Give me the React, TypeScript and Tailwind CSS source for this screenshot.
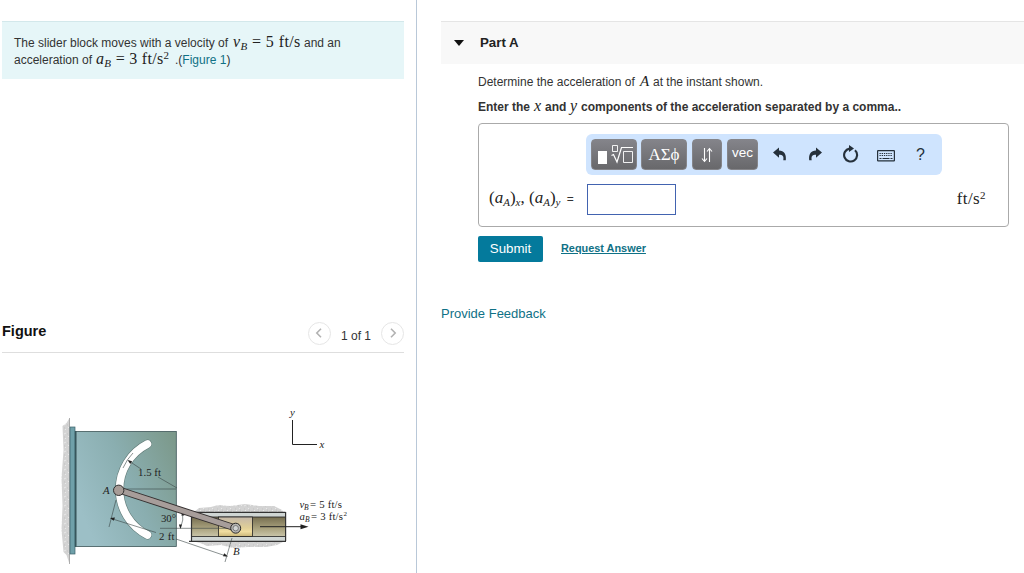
import type { ReactNode } from 'react';

function MathText({ className = 'text-[15px]', children }: { className?: string; children: ReactNode }) {
    return (
        <span className={`font-['Liberation_Serif',serif] font-normal whitespace-pre text-[#222] ${className}`}>
            {children}
        </span>
    );
}

function Sub({ children }: { children: ReactNode }) {
    return <span className="relative top-[3px] text-[11px] italic">{children}</span>;
}

function Sup({ children }: { children: ReactNode }) {
    return <span className="relative -top-[5px] text-[11px]">{children}</span>;
}

function PagerButton({ path }: { path: string }) {
    return (
        <button className="flex size-[23px] items-center justify-center rounded-full border border-[#e6e6e6] bg-white">
            <svg width="8" height="10" viewBox="0 0 8 10" fill="none" stroke="#b2b2b2" strokeWidth="1.6">
                <path d={path} />
            </svg>
        </button>
    );
}

function SliderFigure() {
    return (
        <svg width="404" height="173" viewBox="0 400 404 173" className="block">
            <defs>
                <linearGradient id="plate" x1="0" y1="0.6" x2="1" y2="0.1">
                    <stop offset="0" stopColor="#9cbfc6" />
                    <stop offset="0.5" stopColor="#8aaeb0" />
                    <stop offset="1" stopColor="#7c998b" />
                </linearGradient>
                <linearGradient id="channel" x1="0" y1="0" x2="0" y2="1">
                    <stop offset="0" stopColor="#766e50" />
                    <stop offset="0.6" stopColor="#aaa37f" />
                    <stop offset="1" stopColor="#cac5a9" />
                </linearGradient>
                <linearGradient id="block" x1="0" y1="0" x2="0" y2="1">
                    <stop offset="0" stopColor="#c5b8aa" />
                    <stop offset="0.55" stopColor="#e0cf97" />
                    <stop offset="0.75" stopColor="#f0dda0" />
                    <stop offset="1" stopColor="#c9b578" />
                </linearGradient>
                <pattern id="stone" width="9" height="9" patternUnits="userSpaceOnUse">
                    <rect width="9" height="9" fill="#d3d3d3" />
                    <path d="M1 2l2-1M5 4l1 1M2 7l1-1M7 8l1-1M7 1l1 1" stroke="#e9e9e9" />
                    <path d="M4 2l1 0M1 5l1 0M6 6l1 0" stroke="#bcbcbc" strokeWidth="0.7" />
                </pattern>
            </defs>

            {/* wall and plate */}
            <path d="M69.5 418l-3 5-4 3 1 24-2 28 1 28-1 24 2 22 3 3 3 9z" fill="url(#stone)" />
            <path d="M69.5 418v146" stroke="#909090" strokeWidth="0.7" />
            <rect x="70" y="427" width="5" height="127" fill="#6fa0a9" stroke="#3d626a" strokeWidth="0.7" />
            <rect x="76" y="431.5" width="100.3" height="115" fill="url(#plate)" stroke="#3d5558" strokeWidth="0.8" />
            <path d="M75.5 431v116" stroke="#37565c" strokeWidth="1.4" />
            <path d="M147.5 444A51 51 0 0 0 147.5 535" fill="none" stroke="#5f7976" strokeWidth="8.8" strokeLinecap="round" />
            <path d="M147.5 444A51 51 0 0 0 147.5 535" fill="none" stroke="#fff" strokeWidth="7.6" strokeLinecap="round" />

            {/* guide rail */}
            <path d="M194 512l5-4 12-1 7-2 12 1 15-2 14 2 15 0 8 4 1 2zM192 541l8 2 7 3 14-1 12 3 15-1 18 0 11-2 8-4z" fill="url(#stone)" />
            <rect x="191.5" y="512" width="94" height="29" fill="#d0d6d4" />
            <rect x="191.5" y="517" width="94" height="19.5" fill="url(#channel)" stroke="#222" strokeWidth="0.8" />
            <path d="M191.5 512.3h94M189 541.3h97M191.5 512v29M285.6 512v29" stroke="#333" strokeWidth="1.2" />
            <rect x="218.5" y="517" width="34" height="19.5" fill="url(#block)" stroke="#222" strokeWidth="0.8" />

            {/* dimension lines */}
            <g fill="none" stroke="#3b4747" strokeWidth="0.6">
                <path d="M124 489H176M160 528.3H235M116 500L109 527M232 538L225 562" />
                <path d="M111 518.5L156 532.5M176 539L226 556M129 461L141 469M158 477L177 488M123 468Q127 459 133 453" />
                <path d="M182.5 512Q184 520 180.5 528" />
            </g>
            <g fill="#222">
                <path d="M110 518l5-.4-1.3 3.2zM228 556.5l-5-.3 1.2-3zM127.5 460l4.6 1.2-1.8 2.7zM182.8 511l1.5 4.5h-3zM180.4 529l-1.5-4.5h3z" />
                <path d="M308.5 526.7l-8-2.5v5z" />
            </g>

            {/* connecting rod */}
            <path d="M119 490L235.5 528" stroke="#353030" strokeWidth="7" />
            <path d="M119 490L235.5 528" stroke="#a79d9a" strokeWidth="5" />
            <circle cx="118.7" cy="490.3" r="5.2" fill="#a79c97" stroke="#2f2f2f" />
            <circle cx="235.7" cy="528.2" r="5" fill="#b8b6b4" stroke="#292929" />
            <circle cx="235.7" cy="528.2" r="2.7" fill="#d2d4d4" stroke="#666" strokeWidth="0.8" />

            <path d="M260 526.7H302M292.5 420V444.5H317" fill="none" stroke="#222" strokeWidth="1" />
            <g fontFamily="'Liberation Serif', serif" fontSize="10.8" fill="#222">
                <text x="138" y="476" textLength="23">1.5 ft</text>
                <text x="161" y="522" textLength="15">30°</text>
                <text x="159" y="540" textLength="15.5">2 ft</text>
                <text x="103" y="493.5" fontStyle="italic">A</text>
                <text x="233" y="555" fontStyle="italic">B</text>
                <text x="290" y="416" fontStyle="italic">y</text>
                <text x="319.5" y="447.5" fontStyle="italic">x</text>
                <text x="299.5" y="508" fontStyle="italic">v</text>
                <text x="304" y="510" fontSize="7.5" fontStyle="italic">B</text>
                <text x="310" y="508" textLength="32">= 5 ft/s</text>
                <text x="299.5" y="520" fontStyle="italic">a</text>
                <text x="305" y="522" fontSize="7.5" fontStyle="italic">B</text>
                <text x="311" y="520" textLength="32">= 3 ft/s</text>
                <text x="343.5" y="515.5" fontSize="7">2</text>
            </g>
        </svg>
    );
}

function Toolbar() {
    const button = 'flex h-[31px] shrink-0 items-center justify-center rounded-[4px] border border-[#858589] bg-linear-to-b from-[#84848a] to-[#68686b] text-white';

    return (
        <div className="ml-[107px] flex h-[41px] w-[356px] items-center rounded-[6px] bg-[#cfe4fe] pl-[5px] text-[#25303b]">
            <button className={`${button} w-[46px]`}>
                <svg width="40" height="24" viewBox="0 0 40 24" fill="none" stroke="white" className="shrink-0">
                    <rect x="4" y="8" width="9" height="13" fill="white" stroke="none" />
                    <path d="M18.5 2.5h5v6h-5z" strokeWidth="0.9" />
                    <path d="M17.5 12.5l2-1 3.5 7.5L27.5 4.5H39" strokeWidth="1.2" />
                    <path d="M29.5 8.5h9v11h-9z" strokeWidth="0.9" />
                </svg>
            </button>
            <button className={`${button} ml-1 w-[46px] font-['Liberation_Serif',serif] text-[17px]`}>ΑΣϕ</button>
            <button className={`${button} ml-[5px] w-[30px]`}>
                <svg width="14" height="16" viewBox="0 0 14 16" fill="none" stroke="white" strokeWidth="1.1">
                    <path d="M4.5 1v13M2 11.5l2.5 3 2.5-3M9.5 15V2M7 4.5l2.5-3 2.5 3" />
                </svg>
            </button>
            <button className={`${button} ml-[5px] w-[31px] text-[13.5px]`}><span className="-mt-[2px]">vec</span></button>
            <svg className="-mt-[2px] ml-[15px]" width="14" height="14" viewBox="0 0 14 14" fill="currentColor">
                <path d="M0 5.5L6 .5v3c5 0 7.5 3.5 6.8 9.8h-2.5C11 9 9.5 7.8 6 7.8v3z" />
            </svg>
            <svg className="-mt-[2px] ml-[21px]" width="14" height="14" viewBox="0 0 14 14" fill="currentColor">
                <path d="M14 5.5L8 .5v3C3 3.5.5 7 1.2 13.3h2.5C3 9 4.5 7.8 8 7.8v3z" />
            </svg>
            <svg className="-mt-px ml-[20px]" width="17" height="18" viewBox="0 0 17 18">
                <path d="M13 5.2A6.5 6.5 0 1 1 7.5 3.6" fill="none" stroke="currentColor" strokeWidth="2.1" />
                <path d="M7 0l5 3.5-5 3.5z" fill="currentColor" />
            </svg>
            <svg className="mt-[3px] ml-[18px]" width="18" height="12" viewBox="0 0 18 12" fill="none" stroke="currentColor">
                <rect x="0.6" y="0.6" width="16.8" height="10.3" rx="0.5" strokeWidth="1.2" />
                <path d="M2.5 3.5h13M2.5 5.5h13" strokeDasharray="1.3 0.9" strokeWidth="1.2" />
                <path d="M2.5 8.5h2M5.5 8.5h7M13.5 8.5h2" strokeWidth="1.2" />
            </svg>
            <span className="ml-[21px] text-[16px]">?</span>
        </div>
    );
}

export default function App() {
    return (
        <div className="flex h-[573px] w-[1024px] overflow-hidden bg-white font-['Liberation_Sans',Arial,sans-serif] text-[12px] text-[#333]">
            <div className="flex w-[417px] flex-col border-r border-[#b9c8d8]">
                <div className="mt-[21px] ml-[2px] h-[59px] w-[402px] border-t border-[#d3e8eb] bg-[#e6f6f8] pt-[11px] pl-3 leading-[17px]">
                    <div className="flex h-[17px] items-baseline whitespace-pre">
                        <span className="w-[219px]">The slider block moves with a velocity of</span>
                        <MathText className="w-[71px] text-[16px] tracking-[0.4px]"><i>v</i><Sub>B</Sub> = 5 ft/s</MathText>
                        <span>and an</span>
                    </div>
                    <div className="flex h-[17px] items-baseline whitespace-pre">
                        <span className="w-[82px]">acceleration of</span>
                        <MathText className="w-[79px] text-[16px] tracking-[0.3px]"><i>a</i><Sub>B</Sub> = 3 ft/s<Sup>2</Sup></MathText>
                        <span>.(<a className="text-[#0f7186]">Figure 1</a>)</span>
                    </div>
                </div>
                <div className="mt-[241px] ml-[2px] flex h-[33px] w-[402px] border-b border-[#dedede]">
                    <h2 className="text-[14.5px] leading-[23px] font-bold text-[#111]">Figure</h2>
                    <div className="ml-auto flex h-[26px] items-center gap-[10px]">
                        <PagerButton path="M6 .8L1.8 5 6 9.2" />
                        <span className="pt-[5px] text-[12px]">1 of 1</span>
                        <PagerButton path="M2 .8L6.2 5 2 9.2" />
                    </div>
                </div>
                <div className="mt-[47px]">
                    <SliderFigure />
                </div>
            </div>

            <div className="flex w-[607px] flex-col pl-6">
                <div className="mt-[21px] flex h-[43px] items-center border-t border-[#e5e5e5] bg-[#f8f8f8] pl-[13px]">
                    <svg width="10" height="6" viewBox="0 0 10 6"><path d="M0 0h10L5 6z" fill="#111" /></svg>
                    <h2 className="ml-4 text-[13.3px] font-bold text-[#222]">Part A</h2>
                </div>
                <div className="pl-[37px]">
                    <p className="mt-[9px] flex h-[17px] items-baseline leading-[17px] whitespace-pre">
                        <span className="w-[162px]">Determine the acceleration of</span>
                        <MathText className="w-[13px] text-[15px] italic">A</MathText>
                        <span>at the instant shown.</span>
                    </p>
                    <p className="mt-[7px] flex h-[17px] items-baseline leading-[17px] font-bold whitespace-pre">
                        <span className="w-[56px]">Enter the</span>
                        <MathText className="w-[11px] text-[16px] italic">x</MathText>
                        <span className="w-[25px]">and</span>
                        <MathText className="w-[11px] text-[16px] italic">y</MathText>
                        <span>components of the acceleration separated by a comma..</span>
                    </p>
                    <div className="mt-[9px] h-[104px] w-[531px] rounded-[4px] border border-[#aaa] pt-[10px]">
                        <Toolbar />
                        <div className="mt-[8px] flex h-[32px] items-center pl-[10px]">
                            <div className="-mt-[3px] flex w-[98px] items-baseline whitespace-pre">
                                <MathText className="text-[17px]">(<i>a</i><Sub>A</Sub>)<Sub>x</Sub>, (<i>a</i><Sub>A</Sub>)<Sub>y</Sub></MathText>
                                <span className="ml-[3px]"> =</span>
                            </div>
                            <input className="h-[31px] w-[89px] border border-[#4263b0] bg-white outline-none" />
                            <MathText className="ml-auto pr-[22px] text-[17px] tracking-[0.4px]">ft/s<Sup>2</Sup></MathText>
                        </div>
                    </div>
                    <div className="mt-2 flex h-[27px] items-center">
                        <button className="h-[26px] w-[65px] rounded-[2px] bg-[#047a9c] text-[13.3px] text-white">Submit</button>
                        <a className="ml-[18px] text-[10.9px] font-bold text-[#0f7186] underline">Request Answer</a>
                    </div>
                </div>
                <a className="mt-[43px] text-[13px] leading-[18px] text-[#0f7186]">Provide Feedback</a>
            </div>
        </div>
    );
}
